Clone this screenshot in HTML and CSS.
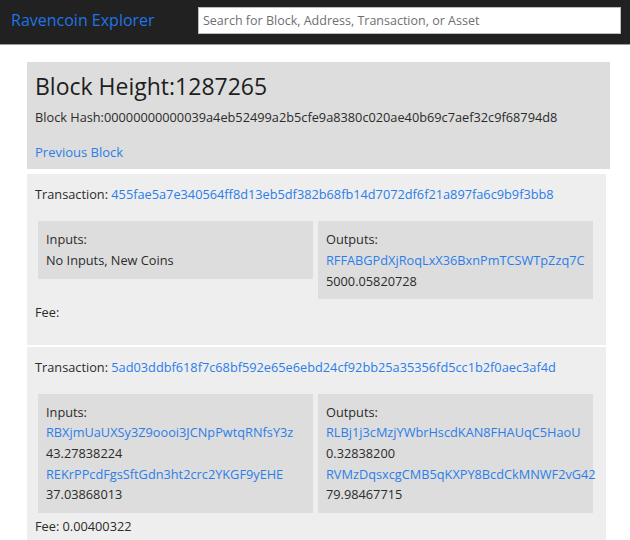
FILE: index.html
```html
<!DOCTYPE html>
<html lang="en">
<head>
<meta charset="utf-8">
<title>Ravencoin Explorer</title>
<link rel="stylesheet" href="styles.css">
</head>
<body>
<nav class="navbar">
  <a class="brand" href="#">Ravencoin Explorer</a>
  <input class="search" type="text" placeholder="Search for Block, Address, Transaction, or Asset">
</nav>
<main class="content">
  <section class="block-head">
    <h1 class="block-title">Block Height:1287265</h1>
    <p class="block-hash">Block Hash:00000000000039a4eb52499a2b5cfe9a8380c020ae40b69c7aef32c9f68794d8</p>
    <a class="link prev" href="#">Previous Block</a>
  </section>

  <section class="tx">
    <p class="tx-id">Transaction: <a class="link" href="#">455fae5a7e340564ff8d13eb5df382b68fb14d7072df6f21a897fa6c9b9f3bb8</a></p>
    <div class="io-row">
      <div class="io">
        <div>Inputs:</div>
        <div>No Inputs, New Coins</div>
      </div>
      <div class="io">
        <div>Outputs:</div>
        <a class="link" href="#">RFFABGPdXjRoqLxX36BxnPmTCSWTpZzq7C</a>
        <div>5000.05820728</div>
      </div>
    </div>
    <p class="fee">Fee: </p>
  </section>

  <section class="tx">
    <p class="tx-id">Transaction: <a class="link" href="#">5ad03ddbf618f7c68bf592e65e6ebd24cf92bb25a35356fd5cc1b2f0aec3af4d</a></p>
    <div class="io-row">
      <div class="io">
        <div>Inputs:</div>
        <a class="link" href="#">RBXjmUaUXSy3Z9oooi3JCNpPwtqRNfsY3z</a>
        <div>43.27838224</div>
        <a class="link" href="#">REKrPPcdFgsSftGdn3ht2crc2YKGF9yEHE</a>
        <div>37.03868013</div>
      </div>
      <div class="io">
        <div>Outputs:</div>
        <a class="link" href="#">RLBj1j3cMzjYWbrHscdKAN8FHAUqC5HaoU</a>
        <div>0.32838200</div>
        <a class="link" href="#">RVMzDqsxcgCMB5qKXPY8BcdCkMNWF2vG42</a>
        <div>79.98467715</div>
      </div>
    </div>
    <p class="fee">Fee: 0.00400322</p>
  </section>
</main>
</body>
</html>
```

FILE: styles.css
```css
* { box-sizing: border-box; }

body {
  margin: 0;
  background: #ffffff;
  font-family: "Open Sans", "Noto Sans", "Liberation Sans", sans-serif;
  font-size: 12.75px;
  line-height: 20.7px;
  color: #2b2b2b;
}

.navbar {
  display: flex;
  align-items: flex-start;
  height: 45px;
  padding: 7px 0 0 11px;
  background: #212121;
  border-bottom: 1px solid #9a9a9a;
}

.brand {
  flex: 0 0 187px;
  line-height: 27px;
  font-size: 16px;
  color: #1f74e6;
  text-decoration: none;
}

.search {
  width: 423px;
  height: 27px;
  margin: 0;
  padding: 0 4px;
  border: 1px solid #bdbdbd;
  background: #fff;
  font-family: inherit;
  font-size: 12.5px;
  color: #333;
}
.search::placeholder { color: #6f6f6f; }

.content {
  padding: 17px 0 0 27px;
}

.link {
  color: #2b7de9;
  text-decoration: none;
}

.block-head {
  width: 583px;
  padding: 10px 8px 7px;
  background: #dddddd;
  margin-bottom: 5px;
}

.block-title {
  margin: 0 0 6px;
  font-size: 23px;
  line-height: 29px;
  font-weight: 400;
  color: #1e1e1e;
}

.block-hash {
  margin: 0 0 14px;
}

.prev {
  display: block;
  font-size: 13px;
}

.tx {
  width: 579px;
  padding: 10px 8px 5px;
  background: #eeeeee;
  margin-bottom: 2px;
}

.tx-id {
  margin: 0 0 16px;
}

.io-row {
  display: flex;
  align-items: flex-start;
  gap: 5px;
  margin-left: 3px;
}

.io {
  flex: 0 0 275px;
  min-width: 0;
  padding: 8px 8px;
  background: #dddddd;
  white-space: nowrap;
}

.io .link { display: block; }

.fee {
  margin: 3px 0 17px;
}
```
